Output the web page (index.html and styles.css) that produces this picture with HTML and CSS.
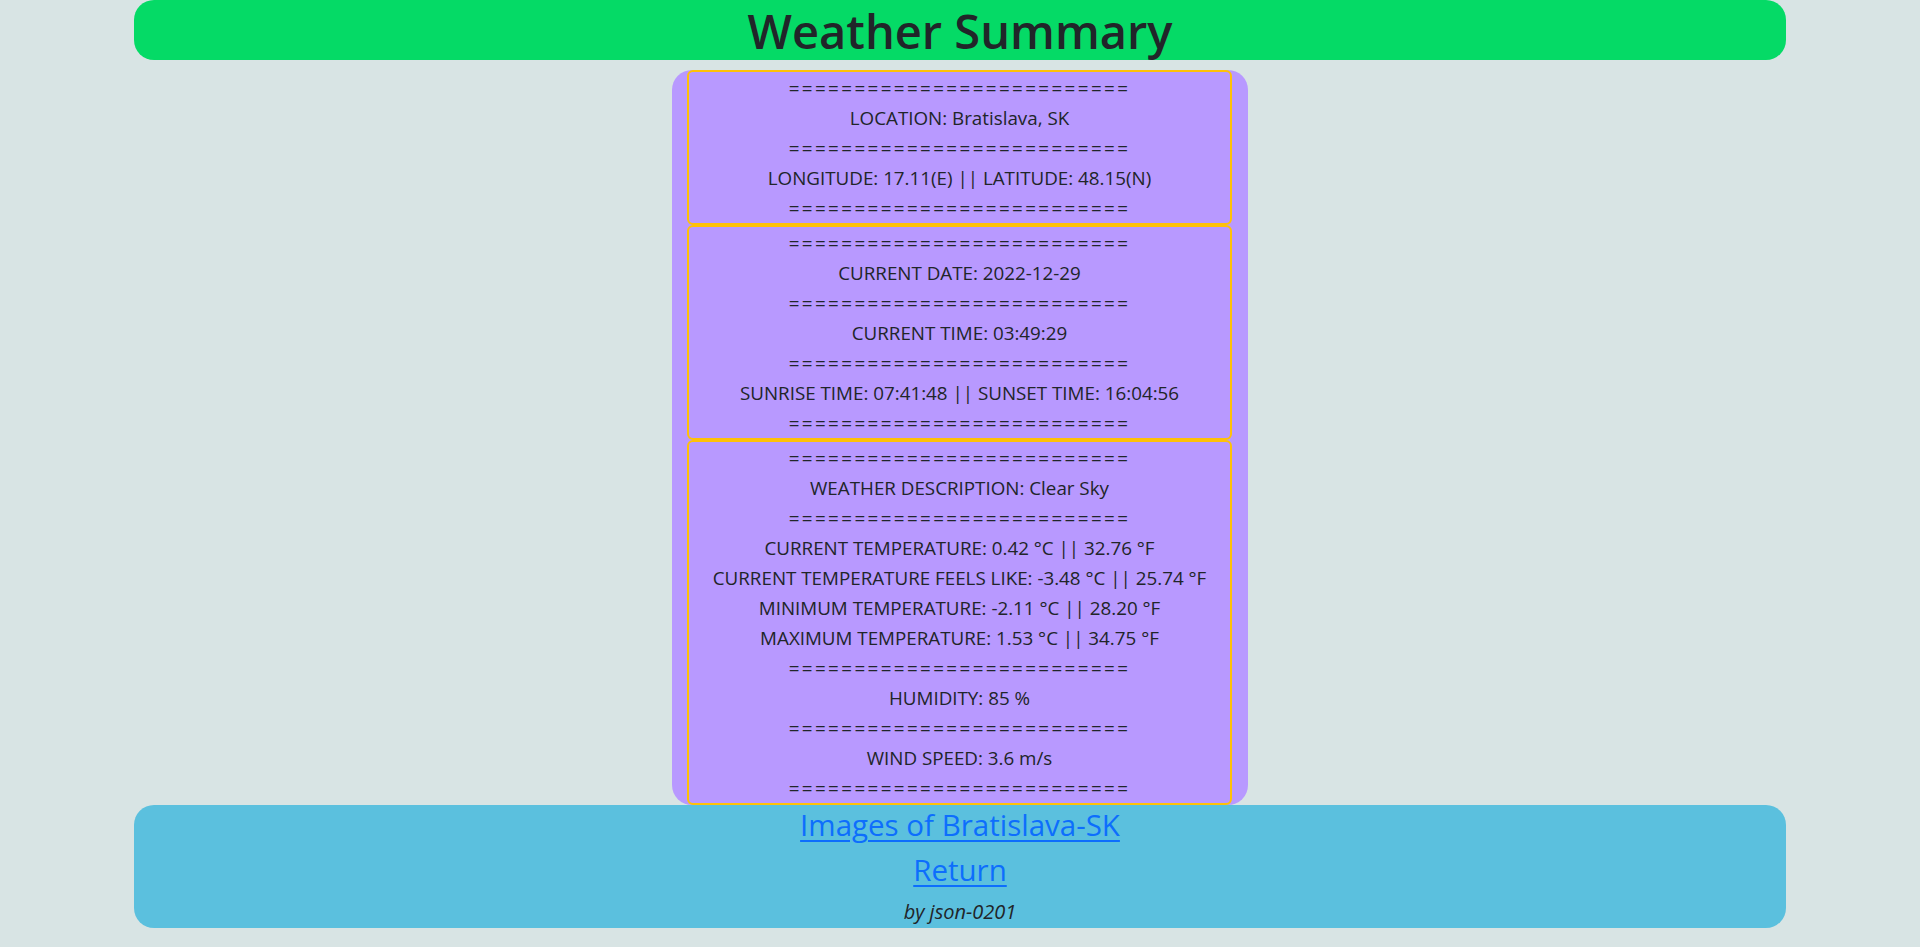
FILE: index.html
```html
<!DOCTYPE html>
<html lang="en">
<head>
<meta charset="utf-8">
<title>Weather Summary</title>
<link rel="stylesheet" href="styles.css">
</head>
<body>
<header class="title-bar">
  <h1 class="title">Weather Summary</h1>
</header>
<main class="summary">
  <section class="block">
    <div class="sep">==========================</div>
    <div class="line">LOCATION: Bratislava, SK</div>
    <div class="sep">==========================</div>
    <div class="line">LONGITUDE: 17.11(E) || LATITUDE: 48.15(N)</div>
    <div class="sep">==========================</div>
  </section>
  <section class="block">
    <div class="sep">==========================</div>
    <div class="line">CURRENT DATE: 2022-12-29</div>
    <div class="sep">==========================</div>
    <div class="line">CURRENT TIME: 03:49:29</div>
    <div class="sep">==========================</div>
    <div class="line">SUNRISE TIME: 07:41:48 || SUNSET TIME: 16:04:56</div>
    <div class="sep">==========================</div>
  </section>
  <section class="block">
    <div class="sep">==========================</div>
    <div class="line">WEATHER DESCRIPTION: Clear Sky</div>
    <div class="sep">==========================</div>
    <div class="line">CURRENT TEMPERATURE: 0.42 °C || 32.76 °F</div>
    <div class="line">CURRENT TEMPERATURE FEELS LIKE: -3.48 °C || 25.74 °F</div>
    <div class="line">MINIMUM TEMPERATURE: -2.11 °C || 28.20 °F</div>
    <div class="line">MAXIMUM TEMPERATURE: 1.53 °C || 34.75 °F</div>
    <div class="sep">==========================</div>
    <div class="line">HUMIDITY: 85 %</div>
    <div class="sep">==========================</div>
    <div class="line">WIND SPEED: 3.6 m/s</div>
    <div class="sep">==========================</div>
  </section>
</main>
<footer class="foot">
  <a class="foot-link" href="#">Images of Bratislava-SK</a>
  <a class="foot-link" href="#">Return</a>
  <div class="credit">by json-0201</div>
</footer>
</body>
</html>
```
FILE: styles.css
```css
* { box-sizing: border-box; }

body {
  margin: 0;
  background: #d8e4e4;
  color: #212529;
  font-family: "Open Sans", "Noto Sans", sans-serif;
  display: flex;
  flex-direction: column;
  align-items: center;
}

.title-bar {
  width: 86%;
  height: 60px;
  background: #05da66;
  border-radius: 20px;
  display: flex;
  justify-content: center;
}

.title {
  margin: 0;
  font-size: 47px;
  line-height: 62px;
  font-weight: 600;
  color: #212529;
  white-space: nowrap;
}

.summary {
  width: 30%;
  margin-top: 10px;
  background: #b899ff;
  border-radius: 20px;
  padding: 0 16px 0 15px;
  display: flex;
  flex-direction: column;
}

.block {
  border: 2px solid #ffc107;
  border-radius: 6px;
  text-align: center;
  font-size: 18.8px;
  line-height: 30px;
  padding-top: 1px;
}

.sep {
  letter-spacing: 2.4px;
}

.foot {
  width: 86%;
  background: #5bc0de;
  border-radius: 20px;
  display: flex;
  flex-direction: column;
  align-items: center;
  gap: 6px;
}

.foot-link {
  font-size: 29.5px;
  line-height: 39px;
  color: #0d6efd;
  text-decoration: underline;
  text-decoration-thickness: 2px;
  text-underline-offset: 4px;
}

.credit {
  font-size: 20px;
  line-height: 30px;
  font-style: italic;
  padding: 2px 0 1px;
}
```
